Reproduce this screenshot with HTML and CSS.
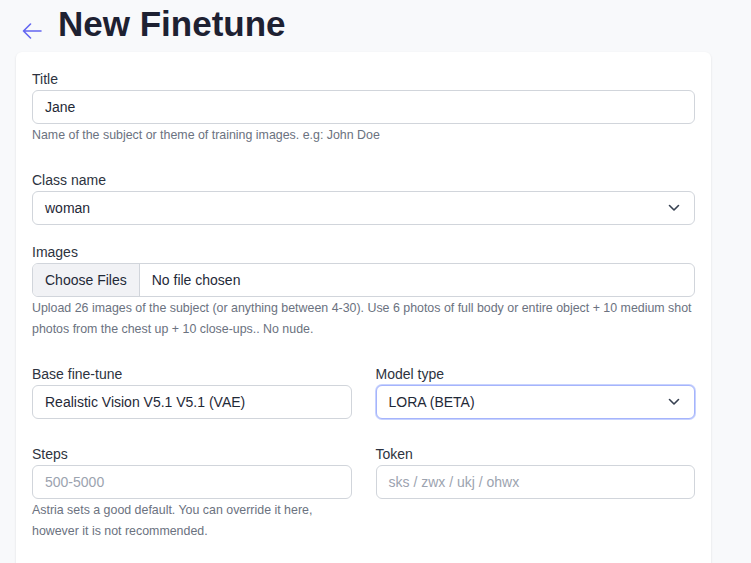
FILE: index.html
```html
<!DOCTYPE html>
<html lang="en">
<head>
<meta charset="utf-8">
<title>New Finetune</title>
<link rel="stylesheet" href="styles.css">
</head>
<body>
<header class="page-head">
  <a class="back" href="#" aria-label="Back">
    <svg width="20" height="16" viewBox="0 0 20 16" fill="none" stroke="#6366f1" stroke-width="1.6" stroke-linecap="round" stroke-linejoin="round"><path d="M19 8H1.5M8.5 1L1.5 8l7 7"/></svg>
  </a>
  <h1 class="title">New Finetune</h1>
</header>

<main class="card">
  <div class="field">
    <label class="label">Title</label>
    <div class="input">Jane</div>
    <p class="help">Name of the subject or theme of training images. e.g: John Doe</p>
  </div>

  <div class="field tight">
    <label class="label">Class name</label>
    <div class="input select">woman
      <svg class="chev" width="12" height="8" viewBox="0 0 12 8" fill="none" stroke="#374151" stroke-width="1.6" stroke-linecap="round" stroke-linejoin="round"><path d="M1.5 1.5L6 6l4.5-4.5"/></svg>
    </div>
  </div>

  <div class="field">
    <label class="label">Images</label>
    <div class="input file">
      <span class="file-btn">Choose Files</span>
      <span class="file-name">No file chosen</span>
    </div>
    <p class="help">Upload 26 images of the subject (or anything between 4-30). Use 6 photos of full body or entire object + 10 medium shot photos from the chest up + 10 close-ups.. No nude.</p>
  </div>

  <div class="row">
    <div class="col">
      <label class="label">Base fine-tune</label>
      <div class="input">Realistic Vision V5.1 V5.1 (VAE)</div>
    </div>
    <div class="col">
      <label class="label">Model type</label>
      <div class="input select focus">LORA (BETA)
        <svg class="chev" width="12" height="8" viewBox="0 0 12 8" fill="none" stroke="#374151" stroke-width="1.6" stroke-linecap="round" stroke-linejoin="round"><path d="M1.5 1.5L6 6l4.5-4.5"/></svg>
      </div>
    </div>
  </div>

  <div class="row">
    <div class="col">
      <label class="label">Steps</label>
      <div class="input placeholder">500-5000</div>
      <p class="help">Astria sets a good default. You can override it here, however it is not recommended.</p>
    </div>
    <div class="col">
      <label class="label">Token</label>
      <div class="input placeholder">sks / zwx / ukj / ohwx</div>
    </div>
  </div>
</main>
</body>
</html>
```

FILE: styles.css
```css
* { box-sizing: border-box; }

html, body {
  margin: 0;
  background: #f8f9fb;
  font-family: "Liberation Sans", Arial, sans-serif;
  color: #1f2937;
}

body {
  height: 563px;
  overflow: hidden;
}

.page-head {
  display: flex;
  align-items: flex-start;
  padding: 4px 0 0 22px;
  height: 52px;
}

.back {
  display: flex;
  width: 20px;
  height: 16px;
  margin-top: 19px;
}

.title {
  margin: 0 0 0 16px;
  font-size: 35px;
  line-height: 40px;
  font-weight: 700;
  color: #1e2132;
}

.card {
  width: 695px;
  margin-left: 16px;
  background: #fff;
  border-radius: 6px;
  box-shadow: 0 1px 3px rgba(0, 0, 0, 0.08), 0 1px 2px rgba(0, 0, 0, 0.04);
  padding: 17px 16px 0;
  height: 540px;
}

.field { margin-bottom: 24px; }
.field.tight { margin-bottom: 17px; }

.label {
  display: block;
  font-size: 14px;
  line-height: 20px;
  margin-bottom: 1px;
  color: #2d3340;
}

.input {
  position: relative;
  height: 34px;
  border: 1px solid #d1d5db;
  border-radius: 6px;
  padding: 0 12px;
  font-size: 14px;
  line-height: 32px;
  color: #1f2937;
  background: #fff;
  white-space: nowrap;
}

.input.placeholder { color: #9ca3af; }

.input.focus {
  border-color: #a5b4fc;
  box-shadow: 0 0 0 1px #c7d2fe;
}

.chev {
  position: absolute;
  right: 14px;
  top: 12px;
}

.input.file {
  display: flex;
  padding: 0;
  overflow: hidden;
}

.file-btn {
  background: #f1f2f5;
  border-right: 1px solid #d1d5db;
  padding: 0 12px;
}

.file-name { padding-left: 12px; }

.help {
  margin: 1px 0 0;
  font-size: 12.4px;
  line-height: 21px;
  color: #6b7280;
}

.row {
  display: grid;
  grid-template-columns: 1fr 1fr;
  column-gap: 24px;
  margin-bottom: 25px;
}
```
